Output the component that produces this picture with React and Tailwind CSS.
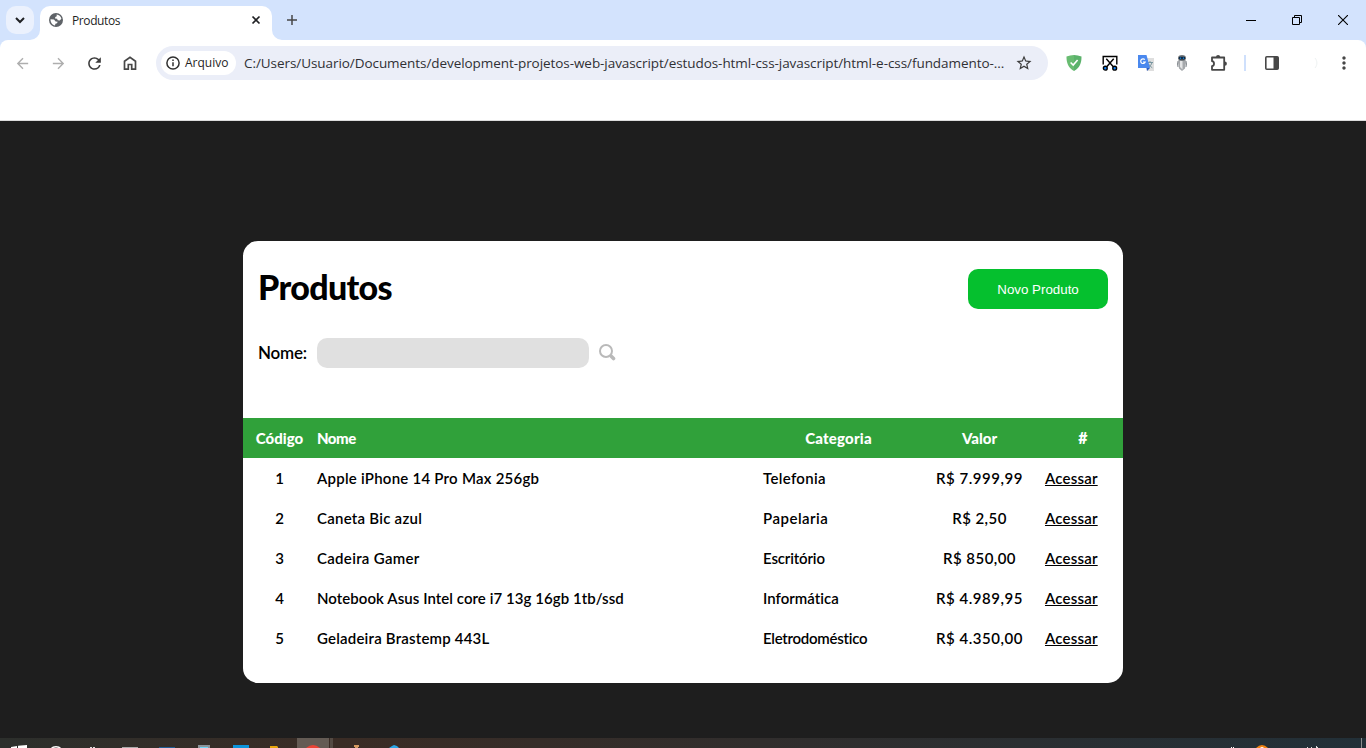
import React from "react";
import { MdArrowBack, MdArrowForward, MdRefresh, MdStarBorder, MdMoreVert } from "react-icons/md";

const products = [
  { id: 1, name: "Apple iPhone 14 Pro Max 256gb", category: "Telefonia", price: "R$ 7.999,99", ns: "tracking-[0.24px]", cs: "tracking-[0.33px]", ps: "tracking-[0.55px]" },
  { id: 2, name: "Caneta Bic azul", category: "Papelaria", price: "R$ 2,50", ns: "tracking-[0.25px]", cs: "tracking-[0.5px]", ps: "tracking-[0.45px]" },
  { id: 3, name: "Cadeira Gamer", category: "Escritório", price: "R$ 850,00", ns: "tracking-[0.3px]", cs: "tracking-[-0.15px]", ps: "tracking-[0.45px]" },
  { id: 4, name: "Notebook Asus Intel core i7 13g 16gb 1tb/ssd", category: "Informática", price: "R$ 4.989,95", ns: "tracking-[0.06px]", cs: "tracking-[0.02px]", ps: "tracking-[0.55px]" },
  { id: 5, name: "Geladeira Brastemp 443L", category: "Eletrodoméstico", price: "R$ 4.350,00", ns: "tracking-[0.2px]", cs: "tracking-[-0.27px]", ps: "tracking-[0.55px]" },
];

function TabStrip() {
  return (
    <div className="flex h-10 items-start bg-[#d3e3fd] pl-[6px] pt-[6px]">
      <button className="flex h-7 w-7 items-center justify-center rounded-[10px] bg-[#ebf1fd]">
        <svg width="10" height="8" viewBox="0 0 10 8" fill="none" stroke="#202124" strokeWidth="2">
          <path d="M1 2l4 4 4-4" />
        </svg>
      </button>
      <div className="relative ml-[6px] flex h-[34px] w-[232px] items-center rounded-t-[10px] bg-white pb-[6px] pl-[9px]">
        <svg className="absolute -left-[10px] bottom-0" width="10" height="10" viewBox="0 0 10 10">
          <path d="M10 0v10H0A10 10 0 0 0 10 0z" fill="#fff" />
        </svg>
        <svg className="absolute -right-[10px] bottom-0" width="10" height="10" viewBox="0 0 10 10">
          <path d="M0 0v10h10A10 10 0 0 1 0 0z" fill="#fff" />
        </svg>
        <svg width="14" height="14" viewBox="0 0 14 14">
          <circle cx="7" cy="7" r="7" fill="#5f6368" />
          <path d="M1.500 6.200L5 6.600l1.600 1.800 2.100.3-.7 1.600-1.600.5-.4 1.700C3.500 12 1.400 9.500 1.500 6.200z" fill="#fff" />
          <path d="M7.600 1.600c2.400.2 4.200 1.900 4.800 4.200l-1.700 1.700-2-.3-.6-1.400L6 5.400l.3-1.500 1.500-.6z" fill="#fff" />
        </svg>
        <span className="ml-[9px] mt-[1px] font-['Open_Sans','Noto_Sans',sans-serif] text-[12px] leading-4 tracking-[-0.4px] text-[#1f1f1f]">Produtos</span>
        <svg className="ml-auto mr-[11px]" width="10" height="10" viewBox="0 0 10 10" stroke="#202124" strokeWidth="1.700">
          <path d="M1.500 1.500l7 7M8.500 1.500l-7 7" />
        </svg>
      </div>
      <svg className="ml-[15px] mt-[9px]" width="10" height="10" viewBox="0 0 10 10" stroke="#474747" strokeWidth="1.500">
        <path d="M5 0v10M0 5h10" />
      </svg>
      <div className="ml-auto flex h-7">
        <span className="flex w-[46px] items-center justify-center">
          <svg width="10" height="10" viewBox="0 0 10 10"><path d="M0 5h10v1H0z" fill="#000" /></svg>
        </span>
        <span className="flex w-[46px] items-center justify-center">
          <svg width="10" height="10" viewBox="0 0 10 10" fill="none" stroke="#000">
            <path d="M.5 2.500h7v7h-7zM2.500 2.500v-2h7v7h-2" />
          </svg>
        </span>
        <span className="flex w-[46px] items-center justify-center">
          <svg width="10" height="10" viewBox="0 0 10 10" stroke="#000" strokeWidth="1.100">
            <path d="M0 0l10 10M10 0L0 10" />
          </svg>
        </span>
      </div>
    </div>
  );
}

function Slot({ children }) {
  return <span className="flex w-9 shrink-0 items-center justify-center">{children}</span>;
}

function Toolbar() {
  return (
    <div className="bg-[#d3e3fd]">
      <div className="flex h-20 items-start rounded-t-[8px] bg-white pl-1 pt-[6px] font-['Open_Sans','Noto_Sans',sans-serif]">
        <div className="flex h-[34px] w-full">
          <Slot><MdArrowBack size={17} color="#aeaeae" /></Slot>
          <Slot><MdArrowForward size={17} color="#aeaeae" /></Slot>
          <Slot><MdRefresh size={19} color="#3c3c3c" /></Slot>
          <Slot>
            <svg width="14" height="14" viewBox="0 0 14 14" fill="none" stroke="#474747" strokeWidth="1.700">
              <path d="M1.500 13.200V5.300L7 1.200l5.500 4.100v7.900H8.700V8.500H5.300v4.700z" />
            </svg>
          </Slot>
          <div className="ml-2 flex w-[892px] shrink-0 items-center rounded-full bg-[#ebeef8] pl-[5px]">
            <div className="flex h-6 w-[75px] shrink-0 items-center rounded-full bg-white pl-[5px]">
              <svg width="14" height="14" viewBox="0 0 14 14" fill="none" stroke="#303030" strokeWidth="1.500">
                <circle cx="7" cy="7" r="6.100" />
                <path d="M7 6.200v4M7 3.600v1.500" />
              </svg>
              <span className="ml-[5px] text-[12px] leading-4 text-[#1f1f1f]">Arquivo</span>
            </div>
            <span className="ml-2 whitespace-nowrap text-[13.5px] leading-5 tracking-[-0.065px] text-[#303034]">C:/Users/Usuario/Documents/development-projetos-web-javascript/estudos-html-css-javascript/html-e-css/fundamento-...</span>
            <span className="ml-auto mr-[15px]"><MdStarBorder size={18} color="#3c3c3c" /></span>
          </div>
          <div className="ml-2 flex">
            <Slot>
              <svg width="16" height="16" viewBox="0 0 16 16">
                <path d="M8 0c2.600.2 5 .8 7.500 1.600C15.600 8 13.800 13 8 16z" fill="#5bb26b" />
                <path d="M8 0C5.400.2 3 .8.500 1.600.4 8 2.200 13 8 16z" fill="#68bc71" />
                <path d="M4.600 7.500l2.600 2.500 4.400-5" fill="none" stroke="#fff" strokeWidth="1.600" />
              </svg>
            </Slot>
            <Slot>
              <svg width="16" height="16" viewBox="0 0 16 16" fill="none" stroke="#000" strokeWidth="1.400">
                <path d="M1.200 9.500V1.500h13.600v8M4.300 3.800l7 8M11.700 3.800l-7 8" />
                <circle cx="3.300" cy="13.200" r="1.900" fill="#1684f5" />
                <circle cx="12.700" cy="13.200" r="1.900" fill="#1684f5" />
              </svg>
            </Slot>
            <Slot>
              <svg width="16" height="16" viewBox="0 0 16 16">
                <path d="M6 3h10v13H9z" fill="#dedede" />
                <path d="M9 7.500h6M12 6v1.500M14 7.500c-.5 2-2 4-4 5M10.500 9c1 1.600 2.300 2.900 3.800 3.800" fill="none" stroke="#7896a0" />
                <path d="M0 0h8.500L12 13H0z" fill="#4a88ee" />
                <path d="M8.500 13H12l-3 3z" fill="#2a5bc0" />
                <path d="M6.800 4.700A2.300 2.300 0 1 0 7.200 7H5" fill="none" stroke="#fff" strokeWidth="1.200" />
              </svg>
            </Slot>
            <Slot>
              <svg width="12" height="16" viewBox="0 0 12 16">
                <path d="M2.400 5h7.200l.4 3-1 5.500L6 16l-3-2.500L2 8z" fill="#a6a9ac" />
                <path d="M2 6l-.6 3 .6 3M10 6l.6 3-.6 3" fill="none" stroke="#8d9297" />
                <path d="M4 5.500h2.500v9L4 12z" fill="#e4e5e6" />
                <ellipse cx="6" cy="3" rx="4" ry="2.900" fill="#72777c" />
                <rect x="2.800" y="1.700" width="6.400" height="2.900" rx="1.400" fill="#071527" />
                <path d="M3.700 3.100h1.600M6.700 3.100h1.600" stroke="#2398f5" strokeWidth="1.200" />
              </svg>
            </Slot>
            <Slot>
              <svg className="ml-[2px]" width="18" height="18" viewBox="0 0 18 18">
                <path d="M2 3.500h12.200v12.300H2v-3.700c2.700-.4 2.700-4.500 0-4.900z" fill="none" stroke="#474747" strokeWidth="1.800" strokeLinejoin="round" />
                <path d="M6 3a2.100 2.100 0 0 1 4.200 0zM14.800 7.600a2.100 2.100 0 0 1 0 4.200z" fill="#474747" />
              </svg>
            </Slot>
          </div>
          <span className="ml-2 h-4 w-[2px] self-center bg-[#cfe0fc]" />
          <div className="ml-2 flex">
            <Slot>
              <svg width="14" height="14" viewBox="0 0 14 14">
                <rect x=".8" y=".8" width="12.400" height="12.400" rx="1" fill="none" stroke="#474747" strokeWidth="1.600" />
                <path d="M8.500 1H13v12H8.500z" fill="#474747" />
              </svg>
            </Slot>
            <Slot>
              <svg className="ml-4" width="4" height="12" viewBox="0 0 4 12" fill="none" stroke="#eef2f2"><path d="M1 1c2.500 3 2.500 7 0 10" /></svg>
            </Slot>
            <Slot><MdMoreVert size={20} color="#474747" /></Slot>
          </div>
        </div>
      </div>
      <div className="h-px bg-[#dcdcdc]" />
    </div>
  );
}

const cols = "grid h-10 grid-cols-[73px_447px_151px_131px_78px] items-center";

function ProductCard() {
  return (
    <section className="h-[442px] w-[880px] rounded-[15px] bg-white font-['Lato','Liberation_Sans',sans-serif] text-black">
      <div className="flex items-start justify-between px-[15px] pt-7">
        <h1 className="-mt-px text-[34px] font-black leading-[38px] tracking-[-0.65px]">Produtos</h1>
        <button className="h-10 w-[140px] rounded-[10px] bg-[#05c02e] pt-px font-['Liberation_Sans',Arial,sans-serif] text-[13.333px] text-white">Novo Produto</button>
      </div>
      <div className="mt-[29px] flex h-[30px] items-center pl-[15px]">
        <label className="w-[59px] shrink-0 whitespace-nowrap text-[17px] font-semibold tracking-[-0.2px]">Nome:</label>
        <input className="h-[30px] w-[272px] rounded-[10px] bg-[#e0e0e0]" />
        <svg className="mb-[2px] ml-[10px]" width="17" height="17" viewBox="0 0 17 17" fill="none" stroke="#b9b9b9">
          <circle cx="7" cy="7" r="6" strokeWidth="2" />
          <path d="M11.500 11.500l.8.800" strokeWidth="2" />
          <path d="M12.500 12.500l2 2" strokeWidth="3.600" strokeLinecap="round" />
        </svg>
      </div>
      <div className="mt-[50px] text-[15px]">
        <div className={cols + " bg-[#30a13a] font-black text-white"}>
          <span className="text-center">Código</span>
          <span className="pl-px tracking-[-0.5px]">Nome</span>
          <span className="text-center tracking-[0.2px]">Categoria</span>
          <span className="text-center">Valor</span>
          <span className="pr-[2px] text-center text-[16px]">#</span>
        </div>
        {products.map((p) => (
          <div key={p.id} className={cols + " whitespace-nowrap font-semibold"}>
            <span className="text-center">{p.id}</span>
            <span className="pl-px"><span className={p.ns}>{p.name}</span></span>
            <span><span className={p.cs}>{p.category}</span></span>
            <span className="text-center"><span className={p.ps}>{p.price}</span></span>
            <span><a className="tracking-[0.2px] underline">Acessar</a></span>
          </div>
        ))}
      </div>
    </section>
  );
}

function TaskSlot({ children }) {
  return <span className="flex w-[37px] items-end justify-center">{children}</span>;
}

function Taskbar() {
  return (
    <div className="flex h-[10px] items-stretch overflow-hidden bg-linear-to-r from-[#2c2f2c] via-[#3a2c25] via-25% to-[#223038]">
      <TaskSlot><svg width="16" height="3" viewBox="0 0 16 3"><path d="M0 2l6-1v2H0zM7 .8L16 0v3H7z" fill="#fff" /></svg></TaskSlot>
      <TaskSlot><svg width="12" height="3" viewBox="0 0 12 3"><path d="M1 4a5.500 4 0 0 1 10 0" fill="none" stroke="#fff" strokeWidth="1.500" /></svg></TaskSlot>
      <TaskSlot><svg width="6" height="1"><path d="M0 0h2v1H0zM3 0h2v1H3z" fill="#ddd" /></svg></TaskSlot>
      <TaskSlot><svg width="16" height="1"><path d="M0 0h16v1H0z" fill="#aaa" /></svg></TaskSlot>
      <TaskSlot><svg width="16" height="1"><path d="M0 0h16v1H0z" fill="#205d94" /></svg></TaskSlot>
      <TaskSlot><svg width="12" height="3"><path d="M0 0h12v3H0z" fill="#8c9499" /><path d="M2 2h8v1H2z" fill="#6dd5f7" /></svg></TaskSlot>
      <TaskSlot><svg width="16" height="3"><path d="M0 0h16v3H0z" fill="#0b94dc" /></svg></TaskSlot>
      <TaskSlot><svg className="mr-[7px]" width="8" height="2"><path d="M0 0h7l1 1v1H0z" fill="#e7a60c" /></svg></TaskSlot>
      <span className="ml-px flex w-8 items-end justify-center bg-[#645b54]"><svg width="14" height="3" viewBox="0 0 14 3"><path d="M0 3Q7-3 14 3z" fill="#ea4335" /></svg></span>
      <span className="ml-px w-[3px] bg-[#544a43]" />
      <span className="ml-[5px] flex"><TaskSlot><svg width="5" height="3"><path d="M0 0h5v2H4v1H1V2H0z" fill="#d59a61" /></svg></TaskSlot></span>
      <TaskSlot><svg width="10" height="3" viewBox="0 0 10 3"><path d="M0 3l3-2 2-1 3 1 2 2z" fill="#2ba6e7" /></svg></TaskSlot>
      <span className="ml-auto flex items-end">
        <svg width="4" height="1"><path d="M0 0h1v1H0zM2 0h1v1H2z" fill="#fff" /></svg>
        <svg className="ml-[21px]" width="12" height="3" viewBox="0 0 12 3"><path d="M0 3Q6-3 12 3z" fill="#f28312" /><path d="M4 3q2-2 4 0z" fill="#fff" /></svg>
        <svg className="ml-[39px]" width="11" height="2"><path d="M0 1h1v1H0zM4 1h1v1H4zM9 0h1v1h1v1H9z" fill="#ddd" /></svg>
        <span className="ml-[43px] mr-1 h-[10px] w-px bg-[#8a8d8e]" />
      </span>
    </div>
  );
}

export default function App() {
  return (
    <div className="flex h-[748px] w-[1366px] flex-col overflow-hidden bg-[#1e1e1e]">
      <TabStrip />
      <Toolbar />
      <main className="flex flex-1 items-start justify-center pt-[120px]">
        <ProductCard />
      </main>
      <Taskbar />
    </div>
  );
}
